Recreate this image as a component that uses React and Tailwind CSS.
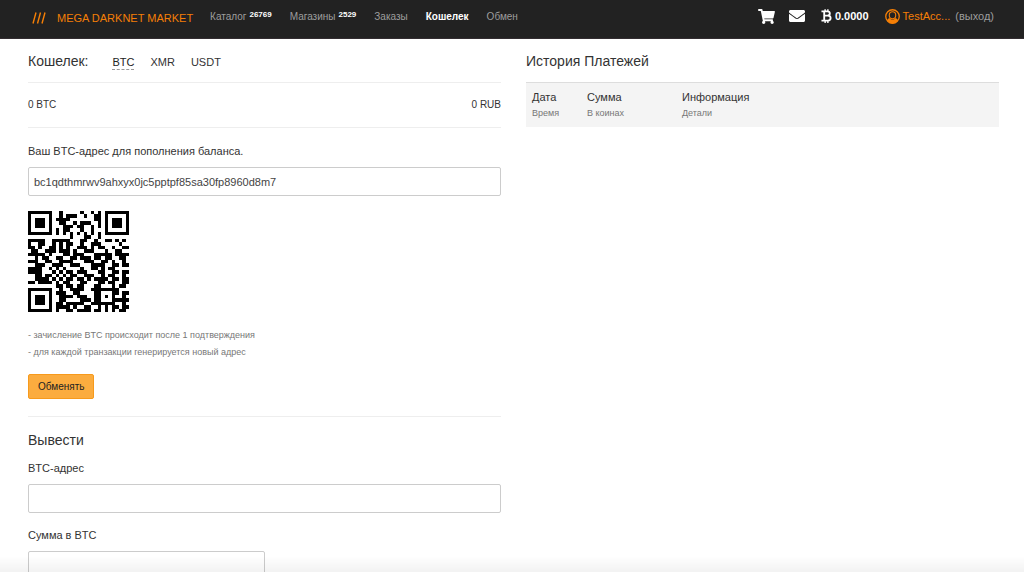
import React, { useState } from "react";
import { FaShoppingCart, FaEnvelope } from "react-icons/fa";

const NAV = [
  { label: "Каталог", count: "26769" },
  { label: "Магазины", count: "2529" },
  { label: "Заказы" },
  { label: "Кошелек", active: true },
  { label: "Обмен" },
];

const COINS = ["BTC", "XMR", "USDT"];

const QR_ROWS = [
  "11111110010000010010101111111",
  "10000010010111001001101000001",
  "10111010111100000001101011101",
  "10111010011001011100101011101",
  "10111010001110110010101011101",
  "10000010101100010010001000001",
  "11111110101010101010101111111",
  "00000000000010001100100000000",
  "11111001111100011001001101010",
  "10011001010110010011100000100",
  "11010011010100111010110010011",
  "01100111011101001110001001100",
  "11111010001101110001111101111",
  "00101100110011011101101100110",
  "11100110011110001110011010010",
  "00111001110011100011110011011",
  "11110010101000010011010110000",
  "11110001010110111000110011011",
  "00110110101011001110010110010",
  "00111101010110110101111011011",
  "11011110101100011000110110011",
  "00000000110110110001100010110",
  "11111110010011110011111111000",
  "10000010111001100001100011011",
  "10111010011110111001101010010",
  "10111010011000011101100011111",
  "10111010110111110011111110010",
  "10000010111101001100101011011",
  "11111110100110111101101010110",
];

const QrCode = () => (
  <svg
    viewBox="0 0 29 29"
    className="block h-[101px] w-[101px]"
    shapeRendering="crispEdges"
    role="img"
    aria-label="QR"
  >
    {QR_ROWS.map((row, y) =>
      row
        .split("")
        .map((cell, x) =>
          cell === "1" ? (
            <rect key={`${x}-${y}`} x={x} y={y} width="1" height="1" />
          ) : null
        )
    )}
  </svg>
);

const BitcoinSign = () => (
  <svg
    viewBox="0 0 24 30"
    className="h-[14px] w-[11px]"
    fill="none"
    stroke="currentColor"
    strokeWidth="4"
    aria-hidden="true"
  >
    <path d="M1 5h13c7 0 7 9 0 9H7h8c8 0 8 11 0 11H1M7 5v20" />
    <path d="M9 0v5M15 0v5M9 25v5M15 25v5" strokeWidth="3" />
  </svg>
);

const UserCircle = () => (
  <svg
    viewBox="0 0 30 30"
    className="h-[15px] w-[15px]"
    fill="none"
    stroke="currentColor"
    aria-hidden="true"
  >
    <circle cx="15" cy="15" r="13.5" strokeWidth="2.6" />
    <ellipse cx="15" cy="12.5" rx="6.5" ry="7" strokeWidth="2.2" />
    <path
      d="M4 23c1-2 2-4 5-5 3 4 9 4 12 0 3 1 4 3 5 5-5 8-17 8-22 0z"
      fill="currentColor"
      stroke="none"
    />
  </svg>
);

const Header = () => (
  <header className="flex h-[39px] items-start justify-between border-b border-[#332d31] bg-[#222222] pr-[30px] pl-8 text-[11px] leading-4">
    <div className="flex pt-2">
      <a href="#" className="mt-[2px] flex text-[#f57f06]">
        <svg
          viewBox="0 0 14 12"
          className="mt-[2px] mr-[11px] h-3 w-[14px]"
          fill="none"
          stroke="currentColor"
          strokeWidth="1.4"
          aria-hidden="true"
        >
          <path d="M1 11.500L4 .5M5.500 11.500L8.500 .5M10 11.500L13 .5" />
        </svg>
        MEGA DARKNET MARKET
      </a>
      <nav className="mt-px ml-[17px] flex gap-[18px] text-[10px]">
        {NAV.map((item) => (
          <a
            key={item.label}
            href="#"
            className={item.active ? "font-bold text-white" : "text-[#9d9d9d]"}
          >
            {item.label}
            {item.count && (
              <sup className="-top-[3px] ml-[3px] align-baseline text-[8px] leading-none font-bold text-white">
                {item.count}
              </sup>
            )}
          </a>
        ))}
      </nav>
    </div>
    <div className="flex items-center pt-2 text-white">
      <a href="#" aria-label="Корзина" className="mr-[14px]">
        <FaShoppingCart className="h-[15px] w-[17px]" />
      </a>
      <a href="#" aria-label="Сообщения" className="mr-4">
        <FaEnvelope className="h-4 w-4" />
      </a>
      <a href="#" className="mr-4 flex items-center gap-[3px] font-bold">
        <BitcoinSign />
        0.0000
      </a>
      <a href="#" className="mr-[5px] flex items-center gap-[3px] text-[#f57f06]">
        <UserCircle />
        TestAcc...
      </a>
      <a href="#" className="text-[#9d9d9d]">
        (выход)
      </a>
    </div>
  </header>
);

const App = () => {
  const [coin, setCoin] = useState("BTC");
  const [address, setAddress] = useState("");
  const [amount, setAmount] = useState("");

  return (
    <div className="h-screen overflow-hidden bg-white font-['Liberation_Sans',Arial,sans-serif] text-[11px] leading-4 text-[#333333]">
      <Header />

      <main className="grid grid-cols-2 gap-[25px] pr-[25px] pl-7">
        {/* Wallet */}
        <section>
          <div className="flex h-11 items-center border-b border-[#eeeeee]">
            <h1 className="mr-6 text-sm">Кошелек:</h1>
            <div className="flex gap-4 pt-[3px]">
              {COINS.map((c) => (
                <button
                  key={c}
                  type="button"
                  onClick={() => setCoin(c)}
                  className={
                    c === coin
                      ? "border-b border-dashed border-[#999999] text-[11px] leading-[14px] text-[#222222]"
                      : "border-b border-transparent text-[11px] leading-[14px]"
                  }
                >
                  {c}
                </button>
              ))}
            </div>
          </div>

          <div className="flex h-[45px] items-center justify-between border-b border-[#eeeeee] text-[10px]">
            <span>0 BTC</span>
            <span>0 RUB</span>
          </div>

          <label htmlFor="deposit" className="mt-[15px] block">
            Ваш BTC-адрес для пополнения баланса.
          </label>
          <input
            id="deposit"
            readOnly
            value="bc1qdthmrwv9ahxyx0jc5pptpf85sa30fp8960d8m7"
            className="mt-2 block h-[29px] w-full rounded-[2px] border border-[#cccccc] px-[5px] text-[11px] text-[#444444]"
          />

          <div className="mt-[15px]">
            <QrCode />
          </div>

          <div className="mt-[15px] text-[9px] leading-[17px] text-[#777777]">
            <p>- зачисление BTC происходит после 1 подтверждения</p>
            <p>- для каждой транзакции генерируется новый адрес</p>
          </div>

          <button
            type="button"
            className="mt-[13px] block h-[25px] rounded-[2px] border border-[#f79a1c] bg-[#fbac3f] px-[9px] text-[10px] text-[#222222]"
          >
            Обменять
          </button>

          {/* Withdraw */}
          <form
            className="mt-[17px] border-t border-[#eeeeee]"
            onSubmit={(e) => e.preventDefault()}
          >
            <h2 className="mt-[15px] text-sm leading-4">Вывести</h2>
            <label htmlFor="address" className="mt-3 block">
              BTC-адрес
            </label>
            <input
              id="address"
              value={address}
              onChange={(e) => setAddress(e.target.value)}
              className="mt-2 block h-[29px] w-full rounded-[2px] border border-[#cccccc] px-[5px]"
            />
            <label htmlFor="amount" className="mt-[14px] block">
              Сумма в BTC
            </label>
            <input
              id="amount"
              value={amount}
              onChange={(e) => setAmount(e.target.value)}
              className="mt-2 block h-[29px] w-1/2 rounded-[2px] border border-[#cccccc] px-[5px]"
            />
          </form>
        </section>

        {/* Payment history */}
        <section>
          <h2 className="flex h-[43px] items-center text-sm">История Платежей</h2>
          <table className="w-full table-fixed border-t border-[#dddddd] bg-[#f4f4f4] text-left">
            <thead>
              <tr className="h-11">
                <th className="w-[55px] pl-[6px] font-normal">
                  Дата
                  <small className="block text-[9px] text-[#777777]">Время</small>
                </th>
                <th className="w-[95px] pl-[6px] font-normal">
                  Сумма
                  <small className="block text-[9px] text-[#777777]">В коинах</small>
                </th>
                <th className="pl-[6px] font-normal">
                  Информация
                  <small className="block text-[9px] text-[#777777]">Детали</small>
                </th>
              </tr>
            </thead>
          </table>
        </section>
      </main>

      {/* Fade at the bottom edge of the window */}
      <div className="pointer-events-none fixed inset-x-0 bottom-0 h-4 bg-gradient-to-b from-transparent to-black/5" />
    </div>
  );
};

export default App;
